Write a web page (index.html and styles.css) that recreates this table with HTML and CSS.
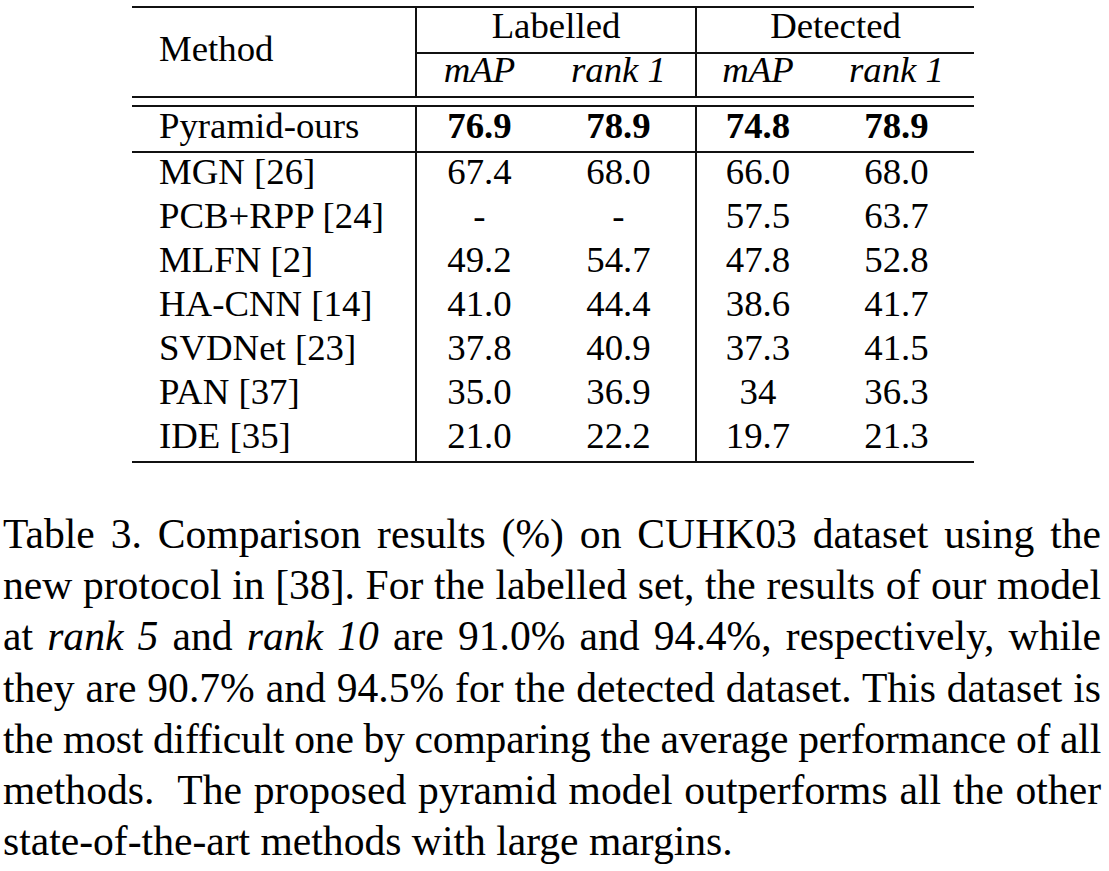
FILE: index.html
```html
<!DOCTYPE html>
<html lang="en">
<head>
<meta charset="utf-8">
<title>Table 3 – CUHK03 comparison</title>
<link rel="stylesheet" href="styles.css">
</head>
<body>
<main class="page">
  <table class="results">
    <colgroup>
      <col class="c-method">
      <col class="c-lmap">
      <col class="c-lrank">
      <col class="c-dmap">
      <col class="c-drank">
    </colgroup>
    <thead>
      <tr class="group-row">
        <th class="method-head" rowspan="2">Method</th>
        <th class="group rule-left" colspan="2">Labelled</th>
        <th class="group rule-left" colspan="2">Detected</th>
      </tr>
      <tr class="metric-row">
        <th class="metric rule-left">mAP</th>
        <th class="metric">rank 1</th>
        <th class="metric rule-left">mAP</th>
        <th class="metric">rank 1</th>
      </tr>
    </thead>
    <tbody>
      <tr class="gap-row" aria-hidden="true"><td colspan="5"></td></tr>
      <tr class="row ours">
        <td class="name">Pyramid-ours</td>
        <td class="num rule-left best">76.9</td>
        <td class="num best">78.9</td>
        <td class="num rule-left best">74.8</td>
        <td class="num best">78.9</td>
      </tr>
      <tr class="row">
        <td class="name">MGN [26]</td>
        <td class="num rule-left">67.4</td>
        <td class="num">68.0</td>
        <td class="num rule-left">66.0</td>
        <td class="num">68.0</td>
      </tr>
      <tr class="row">
        <td class="name">PCB+RPP [24]</td>
        <td class="num rule-left">-</td>
        <td class="num">-</td>
        <td class="num rule-left">57.5</td>
        <td class="num">63.7</td>
      </tr>
      <tr class="row">
        <td class="name">MLFN [2]</td>
        <td class="num rule-left">49.2</td>
        <td class="num">54.7</td>
        <td class="num rule-left">47.8</td>
        <td class="num">52.8</td>
      </tr>
      <tr class="row">
        <td class="name">HA-CNN [14]</td>
        <td class="num rule-left">41.0</td>
        <td class="num">44.4</td>
        <td class="num rule-left">38.6</td>
        <td class="num">41.7</td>
      </tr>
      <tr class="row">
        <td class="name">SVDNet [23]</td>
        <td class="num rule-left">37.8</td>
        <td class="num">40.9</td>
        <td class="num rule-left">37.3</td>
        <td class="num">41.5</td>
      </tr>
      <tr class="row">
        <td class="name">PAN [37]</td>
        <td class="num rule-left">35.0</td>
        <td class="num">36.9</td>
        <td class="num rule-left">34</td>
        <td class="num">36.3</td>
      </tr>
      <tr class="row last">
        <td class="name">IDE [35]</td>
        <td class="num rule-left">21.0</td>
        <td class="num">22.2</td>
        <td class="num rule-left">19.7</td>
        <td class="num">21.3</td>
      </tr>
    </tbody>
  </table>

  <p class="caption">
    <span class="line">Table 3. Comparison results (%) on CUHK03 dataset using the</span>
    <span class="line">new protocol in [38]. For the labelled set, the results of our model</span>
    <span class="line">at <em>rank 5</em> and <em>rank 10</em> are <span class="math">91.0%</span> and <span class="math">94.4%</span>, respectively, while</span>
    <span class="line">they are <span class="math">90.7%</span> and <span class="math">94.5%</span> for the detected dataset. This dataset is</span>
    <span class="line tight">the most difficult one by comparing the average performance of all</span>
    <span class="line">methods.&nbsp; The proposed pyramid model outperforms all the other</span>
    <span class="line last-line">state-of-the-art methods with large margins.</span>
  </p>
</main>
</body>
</html>
```

FILE: styles.css
```css
html, body {
  margin: 0;
  padding: 0;
  background: #ffffff;
}

body {
  font-family: "Liberation Serif", "Times New Roman", serif;
  color: #000000;
}

.page {
  width: 1109px;
  padding-top: 6px;
}

/* ---------- table ---------- */
.results {
  margin-left: 132px;
  width: 842px;
  table-layout: fixed;
  border-collapse: separate;
  border-spacing: 0;
  font-size: 36.8px;
}

.c-method { width: 283px; }
.c-lmap   { width: 127px; }
.c-lrank  { width: 153px; }
.c-dmap   { width: 124px; }
.c-drank  { width: 155px; }

.results th,
.results td {
  box-sizing: border-box;
  padding: 0;
  font-weight: normal;
  text-align: center;
  line-height: 36px;
  white-space: nowrap;
}

.rule-left {
  border-left: 2px solid #111111;
}

/* header */
.group-row th {
  border-top: 2px solid #111111;
}

.method-head {
  text-align: left !important;
  vertical-align: top;
  padding: 23px 0 0 27px !important;
  border-bottom: 2px solid #111111;
}

.group {
  padding-bottom: 8px !important;
  border-bottom: 2px solid #111111;
}

.metric {
  font-style: italic;
  line-height: 31px !important;
  padding-bottom: 11px !important;
  border-bottom: 2px solid #111111;
}

/* gap of the double rule */
.gap-row td {
  height: 7px;
  font-size: 0;
  line-height: 0 !important;
}

/* body rows */
.row td {
  padding: 1px 0 7px;
}

.row .name {
  text-align: left;
  padding-left: 27px;
}

.ours td {
  border-top: 2px solid #111111;
  border-bottom: 2px solid #111111;
}

.best {
  font-weight: bold !important;
}

.last td {
  border-bottom: 2px solid #111111;
}

/* ---------- caption ---------- */
.caption {
  margin: 46px 0 0 3px;
  width: 1098px;
  font-size: 41.6px;
  line-height: 51.2px;
}

.caption .line {
  display: block;
  text-align: justify;
  text-align-last: justify;
  white-space: nowrap;
  word-spacing: -4px;
}

.caption .tight {
  word-spacing: -6px;
  letter-spacing: -0.2px;
}

.caption .last-line {
  text-align: left;
  text-align-last: left;
  word-spacing: 0;
}

.caption em {
  font-style: italic;
}
```
